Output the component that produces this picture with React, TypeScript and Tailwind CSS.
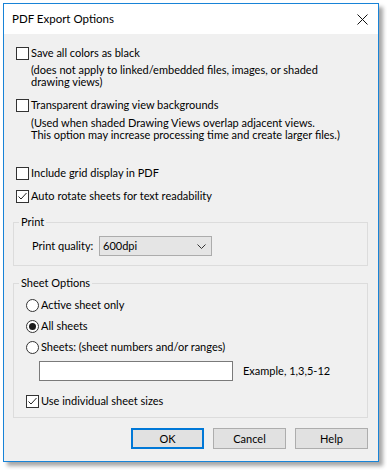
import React from 'react';

const font = { fontFamily: 'Lato, "Open Sans", sans-serif' };

function Check({ checked }: { checked?: boolean }) {
  return (
    <span className="flex h-[13px] w-[13px] shrink-0 items-center justify-center border border-[#333] bg-white">
      {checked && (
        <svg width="11" height="11" viewBox="0 0 11 11">
          <path d="M1.5 5.5 L4 8 L9.5 2" fill="none" stroke="#222" strokeWidth="1" />
        </svg>
      )}
    </span>
  );
}

function Radio({ checked }: { checked?: boolean }) {
  return (
    <span className="flex h-[13px] w-[13px] shrink-0 items-center justify-center rounded-full border border-[#333] bg-white">
      {checked && <span className="h-[7px] w-[7px] rounded-full bg-[#1a1a1a]" />}
    </span>
  );
}

function CheckRow({ label, checked }: { label: string; checked?: boolean }) {
  return (
    <div className="flex h-[14px] items-center gap-[2px] pl-[12px]">
      <Check checked={checked} />
      <span className="leading-[14px]">{label}</span>
    </div>
  );
}

function RadioRow({ label, checked }: { label: string; checked?: boolean }) {
  return (
    <div className="flex h-[14px] items-center gap-[2px]">
      <Radio checked={checked} />
      <span className="leading-[14px]">{label}</span>
    </div>
  );
}

function Button({ label, primary }: { label: string; primary?: boolean }) {
  return (
    <button
      className={`h-[21px] w-[73px] bg-[#e1e1e1] text-[11px] leading-none text-black ${
        primary ? 'border-2 border-[#0078d7]' : 'border border-[#adadad]'
      }`}
    >
      {label}
    </button>
  );
}

export default function App() {
  return (
    <div className="h-[470px] w-[387px] bg-white pl-[3px] pt-[3px]" style={font}>
      <div className="flex h-[459px] w-[376px] flex-col border border-[#1883d7] bg-[#f0f0f0] text-[11px] text-black shadow-[4px_4px_4px_rgba(0,0,0,0.35)]">
        {/* title bar */}
        <div className="flex h-[30px] items-center justify-between bg-white pl-[8px] pr-[10px]">
          <span className="text-[11.5px]">PDF Export Options</span>
          <svg width="11" height="11" viewBox="0 0 11 11">
            <path d="M0.5 0.5 L10.5 10.5 M10.5 0.5 L0.5 10.5" stroke="#111" strokeWidth="1" />
          </svg>
        </div>

        <div className="flex flex-1 flex-col pt-[12px]">
          <CheckRow label="Save all colors as black" />
          <div className="mt-[4px] pl-[27px] leading-[12px]">
            <div>(does not apply to linked/embedded files, images, or shaded</div>
            <div>drawing views)</div>
          </div>

          <div className="mt-[10px]">
            <CheckRow label="Transparent drawing view backgrounds" />
          </div>
          <div className="mt-[5px] pl-[27px] leading-[12px]">
            <div>(Used when shaded Drawing Views overlap adjacent views.</div>
            <div>This option may increase processing time and create larger files.)</div>
          </div>

          <div className="mt-[25px]">
            <CheckRow label="Include grid display in PDF" />
          </div>
          <div className="mt-[9px]">
            <CheckRow label="Auto rotate sheets for text readability" checked />
          </div>

          {/* Print group */}
          <fieldset className="ml-[9px] mr-[10px] mt-[12px] h-[51px] border border-[#dcdcdc]">
            <legend className="ml-[5px] px-[2px] leading-[14px]">Print</legend>
            <div className="mt-[7px] flex items-center pl-[18px]">
              <span className="w-[67px]">Print quality:</span>
              <div className="flex h-[20px] w-[113px] items-center justify-between border border-[#acacac] bg-[#e5e5e5] pl-[3px] pr-[5px]">
                <span>600dpi</span>
                <svg width="9" height="5" viewBox="0 0 9 5">
                  <path d="M0.5 0.5 L4.5 4.5 L8.5 0.5" fill="none" stroke="#333" strokeWidth="1" />
                </svg>
              </div>
            </div>
          </fieldset>

          {/* Sheet Options group */}
          <fieldset className="ml-[9px] mr-[10px] mt-[10px] h-[142px] border border-[#dcdcdc]">
            <legend className="ml-[5px] px-[2px] leading-[14px]">Sheet Options</legend>
            <div className="pl-[12px]">
              <div className="mt-[8px] flex flex-col gap-[7px]">
                <RadioRow label="Active sheet only" />
                <RadioRow label="All sheets" checked />
                <RadioRow label="Sheets: (sheet numbers and/or ranges)" />
              </div>
              <div className="mt-[7px] flex items-center pl-[13px]">
                <div className="h-[20px] w-[194px] border border-[#7a7a7a] bg-white" />
                <span className="ml-[10px]">Example, 1,3,5-12</span>
              </div>
              <div className="mt-[13px] flex h-[14px] items-center gap-[2px]">
                <Check checked />
                <span className="leading-[14px]">Use individual sheet sizes</span>
              </div>
            </div>
          </fieldset>

          <div className="mt-[10px] flex justify-end gap-[9px] pr-[10px]">
            <Button label="OK" primary />
            <Button label="Cancel" />
            <Button label="Help" />
          </div>
        </div>
      </div>
    </div>
  );
}
